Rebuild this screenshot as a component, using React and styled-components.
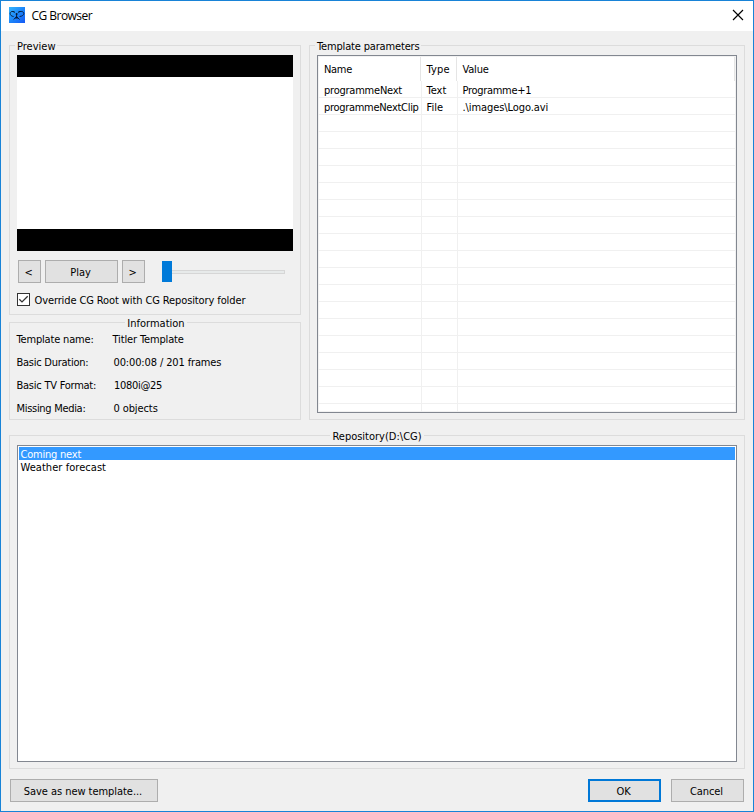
import React from 'react';
import styled, { createGlobalStyle, css } from 'styled-components';

const GlobalStyle = createGlobalStyle`
  * { box-sizing: border-box; }
  body { margin: 0; background: #f0f0f0; }
  button { font: inherit; color: inherit; letter-spacing: inherit; }
`;

const Dialog = styled.div`
  width: 754px;
  height: 812px;
  display: flex;
  flex-direction: column;
  border: 1px solid #1883d7;
  background: #f0f0f0;
  color: #000;
  font: 11px/13px 'DejaVu Sans Condensed', 'DejaVu Sans', sans-serif;
  letter-spacing: -0.11px;
  white-space: pre;
  cursor: default;
`;

const TitleBar = styled.header`
  height: 30px;
  flex: none;
  display: flex;
  align-items: center;
  padding: 0 5px 0 8px;
  background: #fff;
`;

const AppIcon = styled.svg`
  width: 16px;
  height: 16px;
  margin-top: -2px;
`;

const Title = styled.h1`
  flex: 1;
  margin: 0 0 0 6.5px;
  font: 12px/16px 'Open Sans', 'Noto Sans', sans-serif;
  letter-spacing: -0.53px;
`;

const CloseButton = styled.button`
  width: 20px;
  height: 20px;
  display: grid;
  place-items: center;
  padding: 0;
  margin-top: -2px;
  border: 0;
  background: none;
`;

const Content = styled.main`
  flex: 1;
  display: flex;
  flex-direction: column;
  padding: 14px 8px 0;
`;

const TopRow = styled.div`
  display: flex;
  gap: 8px;
  height: 375px;
`;

const LeftColumn = styled.div`
  width: 292px;
  display: flex;
  flex-direction: column;
  gap: 7px;
`;

const Group = styled.section`
  display: flex;
  flex-direction: column;
  flex-shrink: 0;
  border: 1px solid #dcdcdc;
  padding: 0 7px;
  ${p => p.$grow && css`
    flex: 1;
    min-height: 0;
  `}
  ${p => p.$height && css`height: ${p.$height}px;`}
`;

const Legend = styled.h2`
  height: 13px;
  flex: none;
  margin: -6px 0 0 ${p => (p.$center ? p.$shift || 0 : -2)}px;
  padding: 0 2px;
  align-self: ${p => (p.$center ? 'center' : 'flex-start')};
  background: #f0f0f0;
  font: inherit;
  letter-spacing: ${p => p.$spacing || 0}px;
`;

const Screen = styled.div`
  height: 196px;
  margin-top: 2px;
  border: solid #000;
  border-width: 22px 0;
  background: #fff;
`;

const Transport = styled.div`
  display: flex;
  align-items: center;
  gap: 4px;
  height: 23px;
  margin: 9px 0 0 1px;
`;

const Button = styled.button`
  width: ${p => p.$width}px;
  height: 23px;
  padding: 1px 2px 0 0;
  line-height: 13px;
  text-align: center;
  background: #e1e1e1;
  border: ${p => (p.$primary ? '2px solid #0078d7' : '1px solid #adadad')};
  ${p => p.$primary && css`padding-top: 2px;`}
  ${p => p.$spacing !== undefined && css`letter-spacing: ${p.$spacing}px;`}
`;

const Slider = styled.div`
  width: 123px;
  height: 21px;
  display: flex;
  align-items: center;
  margin-left: 13px;
`;

const Thumb = styled.div`
  width: 10px;
  height: 21px;
  background: #007ad9;
`;

const Track = styled.div`
  flex: 1;
  height: 4px;
  border: 1px solid #d6d6d6;
  border-left: 0;
  background: #e7eaea;
`;

const CheckRow = styled.label`
  display: flex;
  align-items: center;
  gap: 4.5px;
  margin-top: 10px;
  height: 13px;
  line-height: 15px;
`;

const CheckBox = styled.span`
  width: 13px;
  height: 13px;
  display: block;
  border: 1px solid #333;
  background: #fff;
  svg { display: block; }
`;

const CheckText = styled.span`
  padding-top: 2px;
`;

const InfoList = styled.dl`
  display: grid;
  grid-template-columns: 96px 1fr;
  grid-auto-rows: 23px;
  align-items: center;
  margin: -2px 0 0 -0.5px;
`;

const InfoName = styled.dt`
  letter-spacing: ${p => p.$spacing}px;
`;

const InfoValue = styled.dd`
  margin: 0 0 0 ${p => p.$indent}px;
  letter-spacing: ${p => p.$spacing}px;
`;

const Table = styled.div`
  width: 420px;
  height: 358px;
  margin-top: 2px;
  padding: 0 1px 0 0;
  border: 1px solid #828790;
  background: #fff;
  box-shadow: inset 0 0 0 1px #f2f2f2;
  overflow: hidden;
`;

const HeaderRow = styled.div`
  display: grid;
  grid-template-columns: 103px 36px 1fr;
  height: 24px;
  margin-top: 1px;
`;

const HeaderCell = styled.div`
  padding: 6px 0 0 ${p => p.$inset}px;
  border-right: 1px solid #e5e5e5;
  letter-spacing: ${p => p.$spacing}px;
`;

const Row = styled.div`
  display: grid;
  grid-template-columns: 104px 36px 1fr;
  height: 17px;
  border-bottom: 1px solid #f0f0f0;
`;

const Cell = styled.div`
  padding: 3px 0 0 ${p => p.$inset}px;
  border-right: ${p => (p.$last ? 0 : '1px solid #f0f0f0')};
  letter-spacing: ${p => p.$spacing || 0}px;
`;

const RepositoryList = styled.ul`
  height: 317px;
  margin: 2px 0 0;
  padding: 1px;
  list-style: none;
  border: 1px solid #828790;
  background: #fff;
`;

const RepositoryItem = styled.li`
  height: 13px;
  line-height: 15px;
  padding-left: 1.5px;
  letter-spacing: ${p => p.$spacing}px;
  ${p => p.$selected && css`
    background: #39f;
    color: #fff;
  `}
`;

const Footer = styled.footer`
  height: 42px;
  display: flex;
  align-items: flex-start;
  gap: 10px;
  padding: 10px 1px 0;
`;

const Spacer = styled.div`
  flex: 1;
`;

const info = [
  { name: 'Template name:', value: 'Titler Template', indent: 0, ns: -0.17, vs: -0.14 },
  { name: 'Basic Duration:', value: '00:00:08 / 201 frames', indent: 1, ns: -0.25, vs: -0.13 },
  { name: 'Basic TV Format:', value: '1080i@25', indent: 1.5, ns: -0.24, vs: -0.3 },
  { name: 'Missing Media:', value: '0 objects', indent: 1, ns: -0.3, vs: -0.1 },
];

const parameters = [
  { name: 'programmeNext', type: 'Text', value: 'Programme+1', ns: -0.23, vs: -0.3 },
  { name: 'programmeNextClip', type: 'File', value: '.\\images\\Logo.avi', ns: -0.3, vs: -0.08 },
];

const rows = [...parameters, ...Array.from({ length: 18 }, () => ({}))];

export default function App() {
  return (
    <Dialog>
      <GlobalStyle />
      <TitleBar>
        <AppIcon viewBox="0 0 16 16">
          <defs>
            <linearGradient id="sky" x1="0" y1="0" x2="1" y2="1">
              <stop offset="0" stopColor="#35b6fb" />
              <stop offset="0.5" stopColor="#1c86fa" />
              <stop offset="1" stopColor="#1559f5" />
            </linearGradient>
          </defs>
          <rect width="16" height="16" fill="url(#sky)" />
          <g fill="none" stroke="#082347" strokeWidth="1">
            <path d="M5.2 6V4.5H2.8C1.6 4.7 1.2 5.6 1.2 6.6C1.2 8 2.4 9.3 4.6 9.5" />
            <path d="M9.8 6V4.5H12.8C14.2 4.7 14.8 5.6 14.8 6.6C14.8 8 13.2 9.3 10.6 9.5" />
            <path d="M7.6 7V9.6L4.6 12.5M7.6 9.6L10.6 12.5" />
          </g>
          <circle cx="7.6" cy="7" r="1" fill="#061a35" />
          <path d="M7.6 8.6L9.2 11.4H6Z" fill="#061a35" />
        </AppIcon>
        <Title>CG Browser</Title>
        <CloseButton aria-label="Close">
          <svg width="12" height="12" viewBox="0 0 12 12">
            <path d="M1 1L11 11M11 1L1 11" stroke="#000" strokeWidth="1.15" />
          </svg>
        </CloseButton>
      </TitleBar>

      <Content>
        <TopRow>
          <LeftColumn>
            <Group $height={270}>
              <Legend>Preview</Legend>
              <Screen />
              <Transport>
                <Button $width={23}>&lt;</Button>
                <Button $width={73} $spacing={0}>Play</Button>
                <Button $width={23}>&gt;</Button>
                <Slider>
                  <Thumb />
                  <Track />
                </Slider>
              </Transport>
              <CheckRow>
                <CheckBox>
                  <svg width="11" height="11" viewBox="0 0 11 11">
                    <path d="M1.3 5.2L4 7.9L9.7 2.2" fill="none" stroke="#333" strokeWidth="1.3" />
                  </svg>
                </CheckBox>
                <CheckText>Override CG Root with CG Repository folder</CheckText>
              </CheckRow>
            </Group>
            <Group $grow>
              <Legend $center $shift={2}>Information</Legend>
              <InfoList>
                {info.map(item => (
                  <React.Fragment key={item.name}>
                    <InfoName $spacing={item.ns}>{item.name}</InfoName>
                    <InfoValue $indent={item.indent} $spacing={item.vs}>{item.value}</InfoValue>
                  </React.Fragment>
                ))}
              </InfoList>
            </Group>
          </LeftColumn>

          <Group $grow>
            <Legend $spacing={-0.16}>Template parameters</Legend>
            <Table>
              <HeaderRow>
                <HeaderCell $inset={6} $spacing={-0.3}>Name</HeaderCell>
                <HeaderCell $inset={5.5} $spacing={0.2}>Type</HeaderCell>
                <HeaderCell $inset={5.5} $spacing={-0.2}>Value</HeaderCell>
              </HeaderRow>
              {rows.map((row, i) => (
                <Row key={i}>
                  <Cell $inset={6} $spacing={row.ns}>{row.name}</Cell>
                  <Cell $inset={4.5}>{row.type}</Cell>
                  <Cell $inset={4.5} $spacing={row.vs} $last>{row.value}</Cell>
                </Row>
              ))}
            </Table>
          </Group>
        </TopRow>

        <Spacer />
        <Group $height={334}>
          <Legend $center>Repository(D:\CG)</Legend>
          <RepositoryList>
            <RepositoryItem $selected $spacing={-0.22}>Coming next</RepositoryItem>
            <RepositoryItem $spacing={0.05}>Weather forecast</RepositoryItem>
          </RepositoryList>
        </Group>
        <Footer>
          <Button $width={148} $spacing={-0.05}>Save as new template...</Button>
          <Spacer />
          <Button $width={73} $primary>OK</Button>
          <Button $width={73}>Cancel</Button>
        </Footer>
      </Content>
    </Dialog>
  );
}
